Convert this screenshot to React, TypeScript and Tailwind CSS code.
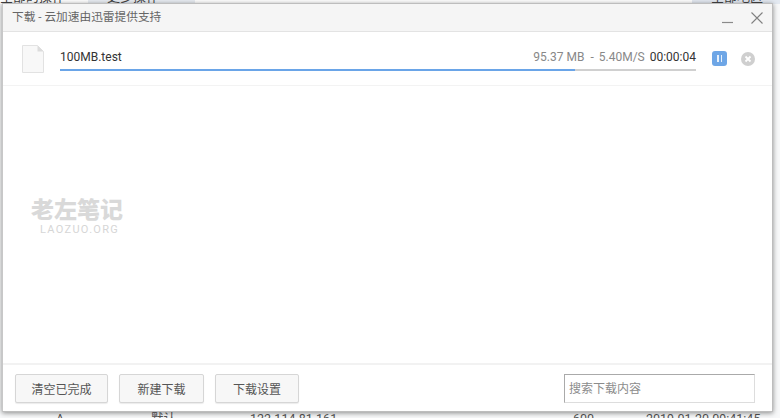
const CJK = "font-['Roboto','Noto_Sans_CJK_SC',sans-serif]";

function FileIcon() {
  return (
    <svg width="24" height="28" viewBox="0 0 24 28" className="shrink-0">
      <path d="M1.5 0.5H16.5L22.5 6.5V27.5H1.5Z" fill="#f8f8f8" stroke="#e2e2e2" />
      <path d="M16.5 0.5V6.5H22.5Z" fill="#dcdcdc" />
    </svg>
  );
}

function Btn({ children, w }: { children: string; w: string }) {
  return (
    <button className={`${w} h-[29px] rounded-[2px] border border-[#d6d6d6] bg-[#f7f7f7] pt-[3px] text-[12px] text-[#555] shadow-[0_1px_1px_rgba(0,0,0,0.08)]`}>
      {children}
    </button>
  );
}

export default function App() {
  return (
    <div className={`relative h-[418px] w-[780px] overflow-hidden bg-[#f7f8f9] ${CJK}`}>
      {/* page behind the dialog */}
      <div className="absolute left-0 top-[-10px] flex h-[14px] w-full bg-white text-[13px] leading-[14px] text-[#444]">
        <span className="w-[88px] whitespace-nowrap">全部的操作</span>
        <span className="w-[107px] whitespace-nowrap bg-[#e9edf3] pl-[19px]">更多操作</span>
        <span className="ml-auto w-[88px] whitespace-nowrap bg-[#e3e9f1] pl-[19px]">全部地区</span>
      </div>
      <div className="absolute left-0 top-[412px] h-[14px] w-full text-[12.5px] leading-[14px] text-[#555]">
        <span className="absolute left-[56px]">A</span>
        <span className="absolute left-[151px]">默认</span>
        <span className="absolute left-[250px]">122.114.81.161</span>
        <span className="absolute left-[573px]">600</span>
        <span className="absolute left-[646px]">2019-01-20 09:41:45</span>
      </div>

      {/* dialog */}
      <div className="absolute left-[2px] top-[3px] flex h-[409px] w-[771px] flex-col border border-[#bdbdbd] border-l-[#c8c8c8] bg-white shadow-[0_1px_5px_rgba(0,0,0,0.45)]">
        <div className="flex h-[28px] shrink-0 items-center justify-between border-b border-[#e3e3e3] bg-[#f5f5f5] pl-[9px] pr-[8px]">
          <span className="text-[11.7px] text-[#666]">下载 - 云加速由迅雷提供支持</span>
          <div className="flex items-center gap-[16px]">
            <svg width="13" height="14" viewBox="0 0 13 14"><path d="M1 11.5H12" stroke="#8a8a8a" strokeWidth="1.2" /></svg>
            <svg width="14" height="14" viewBox="0 0 14 14"><path d="M1.5 1.5L12.5 12.5M12.5 1.5L1.5 12.5" stroke="#808080" strokeWidth="1.1" /></svg>
          </div>
        </div>

        <div className="flex h-[54px] shrink-0 items-center border-b border-[#f3f3f3] pl-[18px]">
          <FileIcon />
          <div className="mb-[1px] ml-[15px] w-[636px]">
            <div className="flex h-[22px] items-center justify-between text-[12px]">
              <span className="text-[12px] text-[#333]">100MB.test</span>
              <span className="flex text-[#888]">
                <span>95.37 MB</span>
                <span className="ml-[6px]">-</span>
                <span className="ml-[5px]">5.40M/S</span>
                <span className="ml-[5px] text-[#333]">00:00:04</span>
              </span>
            </div>
            <div className="mt-[1px] h-[2px] bg-[#d0d0d0]">
              <div className="h-full w-[81%] bg-[#6aa5e8]" />
            </div>
          </div>
          <div className="ml-[16px] flex h-[15px] w-[15px] items-center justify-center gap-[2px] rounded-[3px] bg-[#6ea6e6]">
            <span className="h-[7px] w-[1.5px] bg-[#e6f0fb]" />
            <span className="h-[7px] w-[1.5px] bg-[#e6f0fb]" />
          </div>
          <svg width="14" height="14" viewBox="0 0 14 14" className="ml-[14px]">
            <circle cx="7" cy="7" r="7" fill="#cfcfcf" />
            <path d="M4.5 4.5L9.5 9.5M9.5 4.5L4.5 9.5" stroke="#fff" strokeWidth="1.8" />
          </svg>
        </div>

        <div className="flex flex-1 flex-col items-start pl-[28px] pt-[113px]">
          <span className="text-[23px] font-black leading-[24px] text-[#d9d9d9]">老左笔记</span>
          <span className="ml-[9px] mt-[1px] text-[11px] leading-[12px] tracking-[1.3px] text-[#d6d6d6]">LAOZUO.ORG</span>
        </div>

        <div className="flex h-[48px] shrink-0 items-center border-t-2 border-[#f2f2f2] pl-[12px] pr-[17px]">
          <div className="flex gap-[11px]">
            <Btn w="w-[93px]">清空已完成</Btn>
            <Btn w="w-[85px]">新建下载</Btn>
            <Btn w="w-[84px]">下载设置</Btn>
          </div>
          <div className="ml-auto flex h-[29px] w-[191px] items-center border border-[#aaa] border-r-[#ddd] border-b-[#ddd] bg-white pl-[4px] pt-[2px] text-[12px] text-[#8c8c8c]">
            搜索下载内容
          </div>
        </div>
      </div>
    </div>
  );
}
